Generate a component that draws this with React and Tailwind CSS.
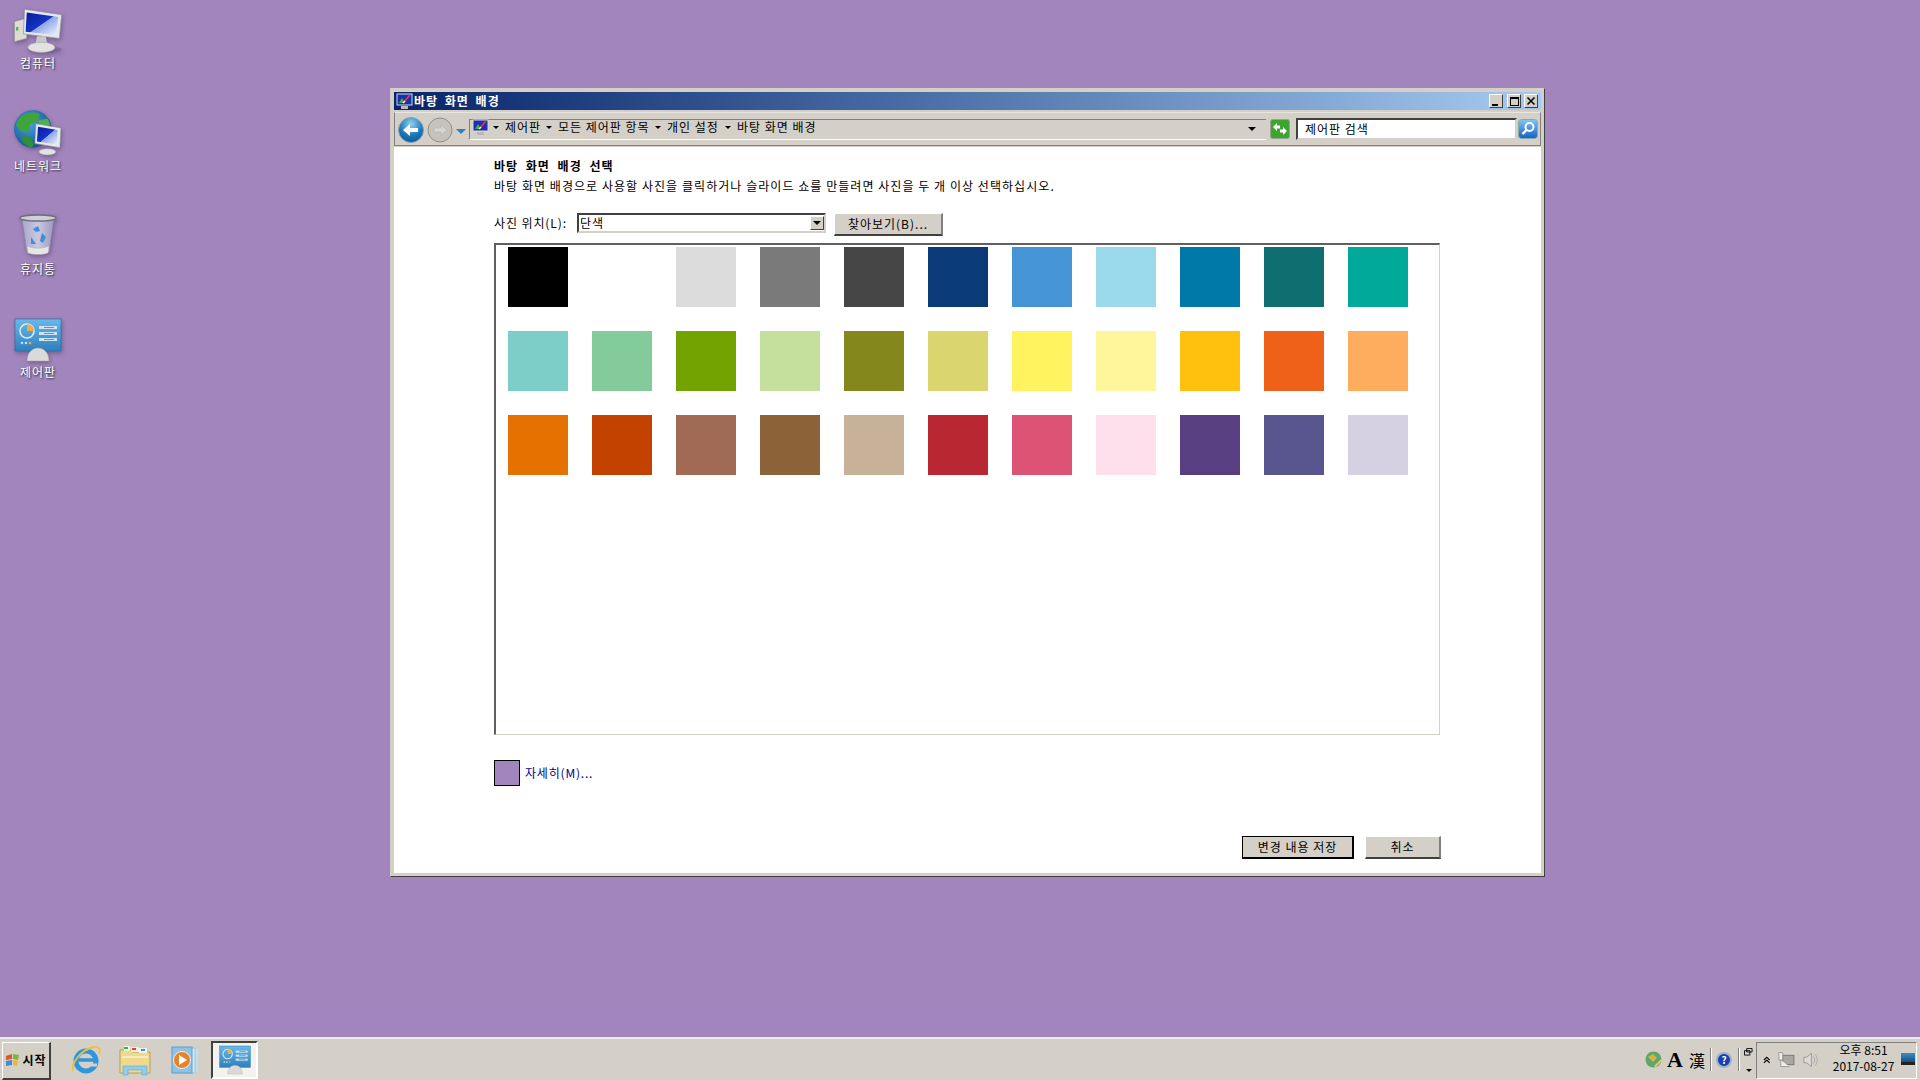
import React from "react";

const FONT = { fontFamily: '"Noto Sans CJK KR", "Liberation Sans", sans-serif' };

const swatches = [
  "#000000", "#ffffff", "#dcdcdc", "#7a7a7a", "#464646", "#0a3a78", "#4595d6", "#9adaec", "#0079a8", "#0f6e70", "#00a99a",
  "#7dcdc8", "#84cb9b", "#72a300", "#c5df9c", "#84881c", "#dbd570", "#fff45f", "#fff59b", "#ffc10e", "#ef6119", "#fead5e",
  "#e57200", "#c34200", "#a06a54", "#8c6239", "#c7b299", "#b92732", "#dc5375", "#fedfec", "#573f81", "#58558f", "#d6d0e3",
];

const MonitorIcon = ({ className }) => (
  <svg viewBox="0 -7 48 48" className={className}>
    <defs>
      <linearGradient id="scr" x1="0" y1="0" x2="1" y2="1">
        <stop offset="0" stopColor="#0a1a9c" />
        <stop offset="0.5" stopColor="#1434c4" />
        <stop offset="0.52" stopColor="#8fa6e6" />
        <stop offset="1" stopColor="#eef3fc" />
      </linearGradient>
    </defs>
    <ellipse cx="30" cy="38" rx="15" ry="3" fill="#6f5a86" opacity="0.5" />
    <path d="M3 13l11-3v18L3 31z" fill="#dcdcd4" stroke="#8d8d88" strokeWidth="0.6" />
    <rect x="4.5" y="18" width="2" height="3" fill="#4caf50" />
    <path d="M12 2l33 5-2 21-32-4z" fill="#e4e7ec" stroke="#8a8f98" strokeWidth="0.6" />
    <path d="M14 5l28 4-2 16-27-3z" fill="url(#scr)" />
    <path d="M23 26h8l1 6h-10z" fill="#c9c9c9" />
    <ellipse cx="27" cy="36" rx="12" ry="4.5" fill="#e2e2e2" stroke="#a8a8a8" strokeWidth="0.6" />
  </svg>
);

const NetworkIcon = ({ className }) => (
  <svg viewBox="0 -2 48 48" className={className}>
    <defs>
      <radialGradient id="glb" cx="0.4" cy="0.35" r="0.7">
        <stop offset="0" stopColor="#4aa3e0" />
        <stop offset="1" stopColor="#14508f" />
      </radialGradient>
    </defs>
    <circle cx="19" cy="20" r="18" fill="url(#glb)" />
    <path d="M8 8c6-4 13-5 18-2l-3 7-6 2-2 7-6 1-6-6c0-3 2-6 5-9z" fill="#3fa43a" />
    <path d="M10 26l7 2 3 7-2 3c-5-1-9-5-10-9z" fill="#2f8f3a" />
    <path d="M24 12l9-2 3 6-10 2z" fill="#4fb04a" />
    <path d="M22 15l24 4-1 19-24-4z" fill="#e6e9ee" stroke="#8a8f98" strokeWidth="0.6" />
    <path d="M24 18l19 3-1 14-19-3z" fill="url(#scr)" />
    <ellipse cx="33" cy="42" rx="8" ry="3" fill="#e2e2e2" stroke="#a8a8a8" strokeWidth="0.5" />
  </svg>
);

const BinIcon = ({ className }) => (
  <svg viewBox="0 -3 48 48" className={className}>
    <defs>
      <linearGradient id="bin" x1="0" y1="0" x2="1" y2="0">
        <stop offset="0" stopColor="#a9a6cc" />
        <stop offset="0.5" stopColor="#c9c8e0" />
        <stop offset="1" stopColor="#9d98bf" />
      </linearGradient>
    </defs>
    <path d="M8 5h32l-5 34c-7 2-15 2-22 0z" fill="url(#bin)" stroke="#8e8fa0" strokeWidth="0.5" />
    <ellipse cx="24" cy="5" rx="18" ry="3" fill="#cfcfda" stroke="#6f6f78" strokeWidth="1.4" />
    <path d="M19 16l5-3 2 5-4 1zM28 20l4 4-3 6-3-2zM17 24l5 7h-5z" fill="#3d8fd6" />
    <path d="M13 33c7 3 15 3 22 0l-1 7c-6 2-14 2-20 0z" fill="#e6e6e6" stroke="#aaa" strokeWidth="0.4" />
  </svg>
);

const PanelIcon = ({ className, view = "0 0 48 44" }) => (
  <svg viewBox={view} className={className}>
    <defs>
      <linearGradient id="pan" x1="0" y1="0" x2="0" y2="1">
        <stop offset="0" stopColor="#6ab8e8" />
        <stop offset="1" stopColor="#2f7fbd" />
      </linearGradient>
    </defs>
    <rect x="1" y="1" width="46" height="32" fill="url(#pan)" stroke="#2a6fa6" strokeWidth="0.7" />
    <circle cx="13" cy="13" r="7" fill="none" stroke="#d7ecf9" strokeWidth="1.6" />
    <path d="M13 6a7 7 0 0 1 7 7h-7z" fill="#f3ab45" />
    <rect x="25" y="8" width="18" height="3" fill="#cde6f7" />
    <rect x="25" y="14" width="18" height="3" fill="#cde6f7" />
    <rect x="25" y="20" width="18" height="3" fill="#cde6f7" />
    <rect x="30" y="9" width="10" height="1" fill="#4e97cf" />
    <rect x="30" y="15" width="10" height="1" fill="#4e97cf" />
    <rect x="30" y="21" width="10" height="1" fill="#4e97cf" />
    <circle cx="8" cy="25" r="1.3" fill="#b9e2f7" />
    <circle cx="12" cy="25" r="1.3" fill="#b9e2f7" />
    <circle cx="16" cy="25" r="1.3" fill="#f3ab45" />
    <path d="M13 43c0-8 5-13 11-13s11 5 11 13z" fill="#dadada" stroke="#a3a3a3" strokeWidth="0.5" />
  </svg>
);

const WinIcon = ({ className }) => (
  <svg viewBox="0 0 17 17" className={className}>
    <rect x="1" y="1" width="15" height="11" fill="#1b2fb0" stroke="#d9d9d9" />
    <path d="M3 10l3-5 3 5z" fill="#3cb54a" />
    <path d="M8 9l6-7" stroke="#e83a3a" strokeWidth="1.6" />
    <path d="M7 10l2-2" stroke="#fff" strokeWidth="1.2" />
    <rect x="5" y="13" width="7" height="3" fill="#b8b8b8" />
  </svg>
);

const DesktopItem = ({ label, children }) => (
  <div className="flex flex-col items-center w-[76px] h-[103px]">
    <div className="h-[53px] flex items-end justify-center drop-shadow-[1px_2px_2px_rgba(40,20,60,0.35)]">{children}</div>
    <span className="text-white text-[12px] leading-[14px] mt-[3px] tracking-[1px] [text-shadow:1px_1px_2px_#222]">{label}</span>
  </div>
);

const Caret = () => (
  <span className="w-0 h-0 border-x-[3px] border-x-transparent border-t-[3px] border-t-black inline-block" />
);

const Crumb = ({ w, children }) => (
  <div className="flex items-center shrink-0" style={{ width: w }}>
    <Caret />
    <span className="ml-[6px] whitespace-nowrap tracking-[1px]">{children}</span>
  </div>
);

const CaptionBtn = ({ children }) => (
  <div className="w-[14px] h-[14px] bg-[#d4d0c8] border border-t-white border-l-white border-r-[#404040] border-b-[#404040] flex items-center justify-center">
    {children}
  </div>
);

const BevelBtn = ({ w, dark, children }) => (
  <div
    className={`h-[23px] bg-[#d4d0c8] flex items-center justify-center text-[12px] tracking-[1px] text-black border-t border-l border-r-2 border-b-2 ${dark ? "border-black" : "border-t-white border-l-white border-r-[#808080] border-b-[#404040]"}`}
    style={{ width: w }}
  >
    {children}
  </div>
);

export default function App() {
  return (
    <div className="relative w-[1920px] h-[1080px] overflow-hidden bg-[#a185bc] flex flex-col text-black" style={FONT}>
      {/* 바탕화면 아이콘 */}
      <div className="flex-1 flex flex-col">
        <DesktopItem label="컴퓨터"><MonitorIcon className="w-[54px] h-[54px]" /></DesktopItem>
        <DesktopItem label="네트워크"><NetworkIcon className="w-[50px] h-[50px]" /></DesktopItem>
        <DesktopItem label="휴지통"><BinIcon className="w-[48px] h-[50px]" /></DesktopItem>
        <DesktopItem label="제어판"><PanelIcon view="0 -4 48 48" className="w-[48px] h-[48px]" /></DesktopItem>
      </div>

      {/* 창 */}
      <div className="absolute left-[390px] top-[88px] w-[1155px] h-[789px] bg-[#d4d0c8] border border-t-[#d4d0c8] border-l-[#d4d0c8] border-r-[#404040] border-b-[#404040] p-[3px] flex flex-col">
        <div className="h-[18px] shrink-0 flex items-center bg-gradient-to-r from-[#0a246a] to-[#a6caf0] pr-[3px]">
          <WinIcon className="w-[17px] h-[17px] ml-[2px]" />
          <span className="ml-[1px] text-white font-bold text-[12px] leading-none flex-1 tracking-[1px] [word-spacing:3px]">바탕 화면 배경</span>
          <div className="flex">
            <CaptionBtn><span className="w-[6px] h-[2px] bg-black mt-[7px] mr-[2px]" /></CaptionBtn>
            <div className="w-[4px]" />
            <CaptionBtn><span className="w-[9px] h-[9px] border border-t-2 border-black" /></CaptionBtn>
            <div className="w-[3px]" />
            <CaptionBtn>
              <svg viewBox="0 0 10 10" className="w-[10px] h-[10px]"><path d="M1.5 1.5l7 7M8.5 1.5l-7 7" stroke="#000" strokeWidth="1.6" /></svg>
            </CaptionBtn>
          </div>
        </div>

        <div className="h-[34px] mt-[2px] shrink-0 flex items-center bg-[#d4d0c8] border border-l-[#808080] border-r-[#808080] border-b-[#808080] border-t-[#e8e6e0] pl-[3px] pr-[1px] text-[12px]">
          <svg viewBox="0 0 26 26" className="w-[26px] h-[26px] shrink-0 mt-px">
            <defs>
              <radialGradient id="back" cx="0.5" cy="0.25" r="0.85">
                <stop offset="0" stopColor="#8fd0f2" />
                <stop offset="0.55" stopColor="#1f78b8" />
                <stop offset="1" stopColor="#0a4f8e" />
              </radialGradient>
            </defs>
            <circle cx="13" cy="13" r="12.5" fill="url(#back)" stroke="#87a3b8" />
            <path d="M5 13l7-6v4h8v4h-8v4z" fill="#fff" />
          </svg>
          <svg viewBox="0 0 26 26" className="w-[26px] h-[26px] shrink-0 ml-[3px] mt-px">
            <circle cx="13" cy="13" r="12" fill="#c6c3bc" stroke="#8f8f8a" />
            <path d="M20 13l-6-5v3H7v4h7v3z" fill="#d8d6d0" stroke="#aaa" strokeWidth="0.5" />
          </svg>
          <span className="ml-[3px] mt-[4px] w-0 h-0 border-x-[5px] border-x-transparent border-t-[5px] border-t-[#2e7fbe] shrink-0" />
          <div className="ml-[3px] w-[797px] h-[21px] flex items-center shrink-0 border-t border-l border-t-[#808080] border-l-[#808080] border-b border-b-white pb-[4px]">
            <WinIcon className="w-[17px] h-[17px] ml-[2px] shrink-0" />
            <div className="ml-[4px] flex items-center flex-1">
              <Crumb w={53}>제어판</Crumb>
              <Crumb w={109}>모든 제어판 항목</Crumb>
              <Crumb w={70}>개인 설정</Crumb>
              <Crumb w={120}>바탕 화면 배경</Crumb>
            </div>
            <span className="w-0 h-0 mr-[10px] mt-[3px] border-x-[4px] border-x-transparent border-t-[4px] border-t-black" />
          </div>
          <svg viewBox="0 0 20 20" className="w-[20px] h-[20px] ml-[4px] shrink-0">
            <rect x="0.5" y="0.5" width="19" height="19" rx="2" fill="#3da52f" stroke="#9aa59a" />
            <path d="M3 8l4-4v2.5h3v3H7V12zM17 12l-4 4v-2.5h-3v-3h3V8z" fill="#fff" />
          </svg>
          <div className="ml-[6px] w-[221px] h-[22px] bg-white border-2 border-t-[#404040] border-l-[#404040] border-r-[#d4d0c8] border-b-[#d4d0c8] flex items-center pl-[7px] shrink-0 tracking-[1px]">
            제어판 검색
          </div>
          <svg viewBox="0 0 20 20" className="w-[20px] h-[20px] ml-[1px] shrink-0">
            <defs>
              <linearGradient id="srch" x1="0" y1="0" x2="0" y2="1">
                <stop offset="0" stopColor="#7ec8f5" />
                <stop offset="1" stopColor="#1560c4" />
              </linearGradient>
            </defs>
            <rect x="0.5" y="0.5" width="19" height="19" rx="3" fill="url(#srch)" stroke="#8aa" />
            <circle cx="11.5" cy="8" r="4" fill="none" stroke="#fff" strokeWidth="2" />
            <path d="M8.5 11l-4 4" stroke="#fff" strokeWidth="2.4" />
          </svg>
        </div>

        <div className="flex-1 bg-white mt-px pl-[100px] pt-[10px] text-[12px] leading-[18px] flex flex-col">
          <div className="font-bold h-[20px] tracking-[1px] [word-spacing:4px]">바탕 화면 배경 선택</div>
          <div className="h-[20px] tracking-[1.05px]">바탕 화면 배경으로 사용할 사진을 클릭하거나 슬라이드 쇼를 만들려면 사진을 두 개 이상 선택하십시오.</div>
          <div className="flex items-start mt-[16px] h-[30px]">
            <span className="w-[83px] h-[20px] flex items-center tracking-[0.9px]">사진 위치(L):</span>
            <div className="w-[249px] h-[20px] border-2 border-t-[#404040] border-l-[#404040] border-r-[#d4d0c8] border-b-[#d4d0c8] flex items-center pl-[1px] pr-0 justify-between">
              <span className="tracking-[1px]">단색</span>
              <span className="w-[14px] h-[14px] bg-[#d4d0c8] border border-t-white border-l-white border-r-[#404040] border-b-[#404040] flex items-center justify-center">
                <span className="w-0 h-0 border-x-[4px] border-x-transparent border-t-[4px] border-t-black" />
              </span>
            </div>
            <div className="ml-[8px]"><BevelBtn w={109}>찾아보기(B)...</BevelBtn></div>
          </div>
          <div className="w-[946px] h-[492px] border-t-2 border-l-2 border-t-[#606060] border-l-[#606060] border-r border-b border-r-[#d4d0c8] border-b-[#d4d0c8] pt-[2px] pl-[12px]">
            <div className="grid grid-cols-[repeat(11,60px)] auto-rows-[60px] gap-x-[24px] gap-y-[24px]">
              {swatches.map((color, index) => (
                <div key={index} style={{ backgroundColor: color }} />
              ))}
            </div>
          </div>
          <div className="flex items-center mt-[25px]">
            <div className="w-[26px] h-[26px] bg-[#a185bc] border border-black" />
            <span className="ml-[5px] text-[#000080] tracking-[0.8px]">자세히(M)...</span>
          </div>
          <div className="flex mt-[50px] w-[947px] justify-end gap-[11px]">
            <BevelBtn w={112} dark>변경 내용 저장</BevelBtn>
            <BevelBtn w={76}>취소</BevelBtn>
          </div>
        </div>
      </div>

      {/* 작업 표시줄 */}
      <div className="h-[43px] shrink-0 bg-[#d4d0c8] border-t-2 border-t-[#eeece6] flex items-center pl-[2px] pr-[3px]">
        <div className="w-[49px] h-[38px] mt-[2px] border border-t-white border-l-white border-r-[#404040] border-b-[#404040] border-r-2 border-b-2 flex items-center justify-center gap-[1px] font-bold text-[12px] tracking-[1px] text-black">
          <svg viewBox="0 0 16 16" className="w-[16px] h-[16px]">
            <path d="M1 4l6-2v5l-6 1z" fill="#e2562b" />
            <path d="M8 2l6 1-1 5-5-1z" fill="#7eb53c" />
            <path d="M1 9l6-1v5l-6 1z" fill="#3b8fd6" />
            <path d="M8 8l5 1-1 5-4-1z" fill="#f0b72c" />
          </svg>
          시작
        </div>
        <svg viewBox="0 0 32 32" className="w-[32px] h-[32px] ml-[19px]">
          <circle cx="16" cy="17" r="10" fill="none" stroke="#2f96dc" strokeWidth="5" />
          <path d="M8 16h17" stroke="#2f96dc" strokeWidth="3.5" />
          <path d="M27 21h-9" stroke="#d4d0c8" strokeWidth="3" />
          <path d="M3 27C1 20 10 6 24 3c5-1 7 2 5 7" fill="none" stroke="#eec13a" strokeWidth="1.8" />
        </svg>
        <svg viewBox="0 0 34 32" className="w-[34px] h-[32px] ml-[16px]">
          <path d="M2 6h10l2 2h18v21H2z" fill="#eed98f" stroke="#b39f5f" />
          <rect x="6" y="2" width="6" height="5" fill="#f6f2df" />
          <rect x="6" y="3" width="4" height="2" fill="#33b44a" />
          <rect x="13" y="3" width="8" height="5" fill="#f6f2df" />
          <rect x="14" y="4" width="4" height="2" fill="#d8453c" />
          <rect x="21" y="4" width="8" height="5" fill="#f6f2df" />
          <rect x="23" y="5" width="4" height="2" fill="#3a90d8" />
          <path d="M4 12h26v2H4z" fill="#f6ecc0" />
          <path d="M5 22h24v9h-5v-5H10v5H5z" fill="#8fcdeb" stroke="#6aa6c8" strokeWidth="0.6" />
        </svg>
        <svg viewBox="0 0 30 30" className="w-[30px] h-[30px] ml-[18px]">
          <rect x="8" y="4" width="20" height="23" fill="#c0dcef" />
          <rect x="5" y="3" width="20" height="25" fill="#d5e7f3" stroke="#a2c4dc" />
          <rect x="2" y="2" width="20" height="26" fill="#8cc3e6" stroke="#5f9dc7" />
          <circle cx="12" cy="15" r="8.5" fill="#e8832a" stroke="#fff" strokeWidth="0.8" />
          <path d="M9 10l8 5-8 5z" fill="#fff" />
        </svg>
        <div className="ml-[11px] w-[47px] h-[38px] mt-[1px] flex items-center justify-center border-2 border-t-[#404040] border-l-[#404040] border-r-white border-b-white bg-[#f4f2ee]">
          <PanelIcon className="w-[32px] h-[30px]" />
        </div>

        <div className="flex-1" />

        <svg viewBox="0 0 18 18" className="w-[18px] h-[18px]">
          <circle cx="8.5" cy="8.5" r="8" fill="#5aa86a" />
          <path d="M3 6l5-3 4 4-4 4z" fill="#d8b04a" />
          <path d="M9 15l7-7 1.5 1.5-7 7z" fill="#e4c870" />
        </svg>
        <span className="ml-[4px] w-[16px] text-center text-[22px] leading-none font-bold" style={{ fontFamily: '"Liberation Serif", serif' }}>A</span>
        <span className="ml-[6px] w-[16px] text-[16px] leading-none">漢</span>
        <div className="ml-[5px] w-[2px] h-[23px] border-l border-l-[#808080] border-r border-r-white" />
        <div className="ml-[4px] w-[16px] h-[16px] rounded-full bg-[#1a3fb0] border-2 border-[#9bb0cc] text-white text-[10px] font-bold flex items-center justify-center">?</div>
        <div className="ml-[6px] w-[2px] h-[23px] border-l border-l-[#808080] border-r border-r-white" />
        <div className="ml-[4px] w-[9px] h-[24px] flex flex-col items-center justify-between">
          <svg viewBox="0 0 10 9" className="w-[9px] h-[8px]">
            <path d="M3 .5h6v4H3zM.5 3h6v5h-6z" fill="#d4d0c8" stroke="#000" />
          </svg>
          <Caret />
        </div>
        <div className="ml-[3px] w-[161px] h-[37px] mt-[1px] border border-t-[#808080] border-l-[#808080] border-r-white border-b-white flex items-center">
          <svg viewBox="0 0 8 8" className="w-[8px] h-[8px] ml-[6px]">
            <path d="M1 4l3-3 3 3M1 7l3-3 3 3" fill="none" stroke="#000" strokeWidth="1.2" />
          </svg>
          <svg viewBox="0 0 18 18" className="w-[18px] h-[18px] ml-[8px]">
            <rect x="5" y="4" width="12" height="10" fill="#a8a8a0" stroke="#777" />
            <path d="M1 1h4v8H1zM3 9v7h9" fill="#f0efe8" stroke="#888" strokeWidth="0.8" />
          </svg>
          <svg viewBox="0 0 18 18" className="w-[18px] h-[18px] ml-[7px]">
            <path d="M2 6h3l5-4v14l-5-4H2z" fill="#dcdad4" stroke="#999" />
            <path d="M12 5c2 2 2 6 0 8M14 3c3 3 3 9 0 12" fill="none" stroke="#aaa" />
          </svg>
          <div className="w-[80px] ml-[7px] pb-[4px] text-center text-[12px] leading-[16px]">
            <div>오후 8:51</div>
            <div>2017-08-27</div>
          </div>
          <div className="ml-auto mr-px mb-[2px] w-[15px] h-[12px] bg-gradient-to-b from-[#3b8fcc] to-[#14507f] border-b-[3px] border-b-[#222]" />
        </div>
      </div>
    </div>
  );
}
